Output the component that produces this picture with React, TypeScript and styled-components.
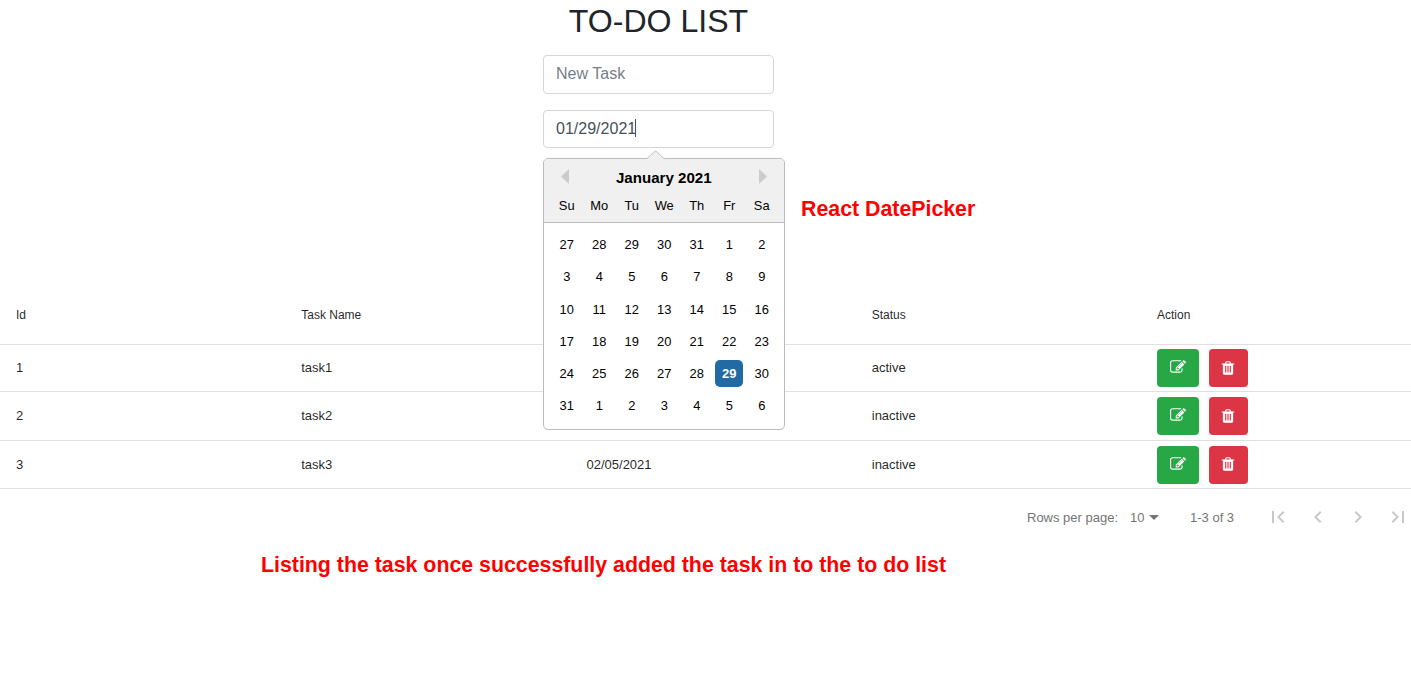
import React from 'react';
import styled, { createGlobalStyle } from 'styled-components';

const GlobalStyle = createGlobalStyle`
  *, *::before, *::after { box-sizing: border-box; }
  body {
    margin: 0;
    background: #fff;
    color: #212529;
    font-family: "Liberation Sans", Arial, sans-serif;
    overflow: hidden;
  }
`;

const Page = styled.main`
  width: 1411px;
  height: 686px;
  overflow: hidden;
`;

const TaskForm = styled.section`
  height: 286px;
  width: 231px;
  margin-left: 543px;
`;

const Title = styled.h1`
  margin: 0;
  padding-top: 2px;
  height: 55px;
  font-size: 32.1px;
  line-height: 39px;
  font-weight: 400;
  text-align: center;
  white-space: nowrap;
`;

const Field = styled.div<{ $placeholder?: boolean; $height: number }>`
  display: flex;
  align-items: center;
  height: ${(p) => p.$height}px;
  padding: 0 12px 3px;
  margin-bottom: 16px;
  border: 1px solid #d3d7db;
  border-radius: 4px;
  font-size: 16.05px;
  line-height: 24px;
  color: ${(p) => (p.$placeholder ? '#777f86' : '#495057')};
`;

const Caret = styled.span`
  width: 1px;
  height: 18px;
  margin-left: -1px;
  background: #495057;
`;

const PickerAnchor = styled.div`
  position: relative;
`;

const Calendar = styled.div`
  position: absolute;
  z-index: 2;
  top: 48px;
  left: 0;
  width: 242px;
  height: 272px;
  border: 1px solid #bcbcbc;
  border-radius: 5px;
  background: #fff;
  color: #000;
`;

const Pointer = styled.svg`
  position: absolute;
  top: -9px;
  left: 102px;
`;

const CalendarHead = styled.header`
  height: 64px;
  padding: 8px 7px 0 6.5px;
  border-bottom: 1px solid #bcbcbc;
  border-radius: 4px 4px 0 0;
  background: #f0f0f0;
`;

const MonthBar = styled.div`
  display: flex;
  align-items: flex-start;
  justify-content: space-between;
  height: 22px;
  padding: 0 10px;
`;

const MonthName = styled.strong`
  font-size: 15.1px;
  line-height: 21px;
`;

const Arrow = styled.svg`
  display: block;
  margin-top: 2px;
`;

const Week = styled.div<{ $head?: boolean }>`
  display: grid;
  grid-template-columns: repeat(7, 32.5px);
  justify-items: center;
  align-items: center;
  height: ${(p) => (p.$head ? 33 : 32.25)}px;
  font-size: 12.9px;
`;

const Month = styled.div`
  padding: 5.500px 7px 0 6.5px;
`;

const Day = styled.span<{ $selected?: boolean }>`
  display: block;
  width: 28px;
  height: 27px;
  line-height: 27px;
  border-radius: 5px;
  text-align: center;
  color: ${(p) => (p.$selected ? '#fff' : 'inherit')};
  background: ${(p) => (p.$selected ? '#216ba5' : 'transparent')};
  font-weight: ${(p) => (p.$selected ? 700 : 400)};
`;

const PickerNote = styled.p`
  position: absolute;
  top: 85px;
  left: 258px;
  margin: 0;
  color: #f00;
  font-size: 21.34px;
  line-height: 28px;
  font-weight: 700;
  white-space: nowrap;
`;

const TaskTable = styled.div`
  color: rgba(0, 0, 0, 0.87);
`;

const Row = styled.div<{ $head?: boolean; $height: number }>`
  display: grid;
  grid-template-columns: repeat(4, 285.25px) 1fr;
  align-items: center;
  height: ${(p) => p.$height}px;
  border-bottom: 1px solid #e0e0e0;
  font-size: ${(p) => (p.$head ? 12 : 13)}px;
`;

const Cell = styled.div<{ $raised?: boolean }>`
  display: flex;
  align-items: center;
  gap: 10px;
  padding-left: 16px;
  padding-bottom: ${(p) => (p.$raised ? 2 : 0)}px;
`;

const ActionButton = styled.button<{ $danger?: boolean }>`
  display: flex;
  align-items: center;
  justify-content: center;
  width: ${(p) => (p.$danger ? 38.6 : 42)}px;
  height: 38px;
  padding: ${(p) => (p.$danger ? '0 0 1px' : '0 0 2px')};
  border: 0;
  border-radius: 4px;
  color: #fff;
  background: ${(p) => (p.$danger ? '#dc3545' : '#28a745')};
`;

const Pagination = styled.footer`
  display: flex;
  align-items: center;
  height: 56px;
  padding-left: 1027px;
  color: #757575;
  font-size: 13px;
  white-space: nowrap;
`;

const PageSize = styled.span`
  display: flex;
  align-items: center;
  flex: 0 0 60px;

  svg {
    margin-left: -2.5px;
  }
`;

const PagerLabel = styled.span`
  flex: 0 0 103px;
`;

const Range = styled.span`
  flex: 0 0 76px;
`;

const PagerButton = styled.span`
  display: flex;
  flex: 0 0 40px;
`;

const Caption = styled.p`
  margin: 6px 0 0 261px;
  color: #f00;
  font-size: 21.34px;
  line-height: 28px;
  font-weight: 700;
  white-space: nowrap;
`;

const weekdays = ['Su', 'Mo', 'Tu', 'We', 'Th', 'Fr', 'Sa'];
const weeks = [
  [27, 28, 29, 30, 31, 1, 2],
  [3, 4, 5, 6, 7, 8, 9],
  [10, 11, 12, 13, 14, 15, 16],
  [17, 18, 19, 20, 21, 22, 23],
  [24, 25, 26, 27, 28, 29, 30],
  [31, 1, 2, 3, 4, 5, 6],
];
const tasks = [
  { id: 1, name: 'task1', date: '', status: 'active', height: 47 },
  { id: 2, name: 'task2', date: '', status: 'inactive', height: 49 },
  { id: 3, name: 'task3', date: '02/05/2021', status: 'inactive', height: 48 },
];
const pagerIcons = [
  'M18.41 16.59L13.82 12l4.59-4.59L17 6l-6 6 6 6zM6 6h2v12H6z',
  'M15.41 7.41L14 6l-6 6 6 6 1.41-1.41L10.83 12z',
  'M10 6L8.59 7.41 13.17 12l-4.58 4.59L10 18l6-6z',
  'M5.59 7.41L10.18 12l-4.59 4.59L7 18l6-6-6-6zM16 6h2v12h-2z',
];

const EditIcon = () => (
  <svg width="16" height="16" viewBox="0 0 1792 1792" fill="currentColor">
    <path d="M888 1184l116-116-152-152-116 116v56h96v96h56zm440-720q-16-16-33 1l-350 350q-17 17-1 33t33-1l350-350q17-17 1-33zm80 594v190q0 119-84.500 203.500t-203.500 84.500h-832q-119 0-203.500-84.500t-84.500-203.500v-832q0-119 84.500-203.500t203.500-84.500h832q63 0 117 25 15 7 18 23 3 17-9 29l-49 49q-14 14-32 8-23-6-45-6h-832q-66 0-113 47t-47 113v832q0 66 47 113t113 47h832q66 0 113-47t47-113v-126q0-13 9-22l64-64q15-15 35-7t20 29zm-96-738l288 288-672 672h-288v-288zm444 132l-92 92-288-288 92-92q28-28 68-28t68 28l152 152q28 28 28 68t-28 68z" />
  </svg>
);

const TrashIcon = () => (
  <svg width="16" height="16" viewBox="0 0 1792 1792" fill="currentColor">
    <path d="M704 1376v-704q0-14-9-23t-23-9h-64q-14 0-23 9t-9 23v704q0 14 9 23t23 9h64q14 0 23-9t9-23zm256 0v-704q0-14-9-23t-23-9h-64q-14 0-23 9t-9 23v704q0 14 9 23t23 9h64q14 0 23-9t9-23zm256 0v-704q0-14-9-23t-23-9h-64q-14 0-23 9t-9 23v704q0 14 9 23t23 9h64q14 0 23-9t9-23zm-544-992h448l-48-117q-7-9-17-11h-317q-10 2-17 11zm928 32v64q0 14-9 23t-23 9h-96v948q0 83-47 143.500t-113 60.500h-832q-66 0-113-58.500t-47-141.500v-952h-96q-14 0-23-9t-9-23v-64q0-14 9-23t23-9h309l70-167q15-37 54-63t79-26h320q40 0 79 26t54 63l70 167h309q14 0 23 9t9 23z" />
  </svg>
);

const DatePicker = () => (
  <Calendar>
    <CalendarHead>
      <MonthBar>
        <Arrow width="8" height="15" viewBox="0 0 8 15">
          <path d="M8 0v15L0 7.500z" fill="#ccc" />
        </Arrow>
        <MonthName>January 2021</MonthName>
        <Arrow width="8" height="15" viewBox="0 0 8 15">
          <path d="M0 0v15L8 7.500z" fill="#ccc" />
        </Arrow>
      </MonthBar>
      <Week $head>
        {weekdays.map((d) => (
          <span key={d}>{d}</span>
        ))}
      </Week>
    </CalendarHead>
    <Month>
      {weeks.map((week, w) => (
        <Week key={w}>
          {week.map((d) => (
            <Day key={d} $selected={w === 4 && d === 29}>
              {d}
            </Day>
          ))}
        </Week>
      ))}
    </Month>
    <Pointer width="19" height="10" viewBox="0 0 19 10">
      <path d="M0.500 9L9.500 0.700 18.500 9V10H0.500z" fill="#f0f0f0" />
      <path d="M0 8.500h1L9.500 0.700 18 8.500h1" fill="none" stroke="#bcbcbc" strokeWidth="0.900" />
    </Pointer>
  </Calendar>
);

export default function App() {
  return (
    <>
      <GlobalStyle />
      <Page>
        <TaskForm>
          <Title>TO-DO LIST</Title>
          <Field $placeholder $height={39}>New Task</Field>
          <PickerAnchor>
            <Field $height={38}>
              01/29/2021
              <Caret />
            </Field>
            <DatePicker />
            <PickerNote>React DatePicker</PickerNote>
          </PickerAnchor>
        </TaskForm>
        <TaskTable>
          <Row $head $height={59}>
            <Cell>Id</Cell>
            <Cell>Task Name</Cell>
            <Cell />
            <Cell>Status</Cell>
            <Cell>Action</Cell>
          </Row>
          {tasks.map((t) => (
            <Row key={t.id} $height={t.height}>
              <Cell $raised={t.id < 3}>{t.id}</Cell>
              <Cell $raised={t.id < 3}>{t.name}</Cell>
              <Cell $raised={t.id < 3}>{t.date}</Cell>
              <Cell $raised={t.id < 3}>{t.status}</Cell>
              <Cell>
                <ActionButton aria-label="Edit">
                  <EditIcon />
                </ActionButton>
                <ActionButton $danger aria-label="Delete">
                  <TrashIcon />
                </ActionButton>
              </Cell>
            </Row>
          ))}
        </TaskTable>
        <Pagination>
          <PagerLabel>Rows per page:</PagerLabel>
          <PageSize>
            10
            <svg width="24" height="24" viewBox="0 0 24 24" fill="#757575">
              <path d="M7 10l5 5 5-5z" />
            </svg>
          </PageSize>
          <Range>1-3 of 3</Range>
          {pagerIcons.map((d) => (
            <PagerButton key={d}>
              <svg width="24" height="24" viewBox="0 0 24 24" fill="#c8c8c8">
                <path d={d} />
              </svg>
            </PagerButton>
          ))}
        </Pagination>
        <Caption>Listing the task once successfully added the task in to the to do list</Caption>
      </Page>
    </>
  );
}
